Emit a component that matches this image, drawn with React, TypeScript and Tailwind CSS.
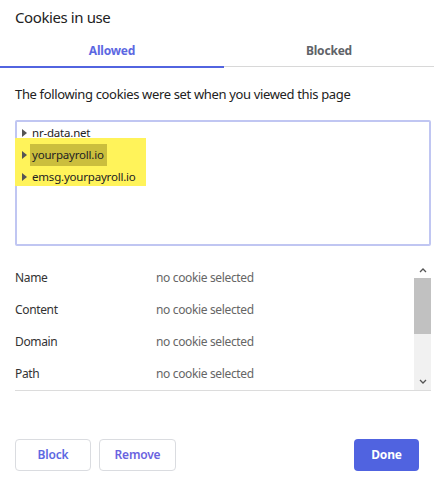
import React from "react";

const font = { fontFamily: '"Noto Sans", "Open Sans", sans-serif' };

function Tri() {
  return (
    <svg width="5" height="8" viewBox="0 0 5 8" className="shrink-0">
      <path d="M0 0 L5 4 L0 8 Z" fill="#555" />
    </svg>
  );
}

export default function App() {
  const rows = ["Name", "Content", "Domain", "Path"];
  return (
    <div className="w-[434px] h-[483px] bg-white text-[#222] flex flex-col" style={font}>
      <div className="pl-[15px] pt-[6px] h-[35px] text-[15px] leading-[22px] tracking-[-0.4px]">Cookies in use</div>
      <div className="flex h-[33px]">
        <div className="w-[224px] flex items-start justify-center pt-[7px] border-b-2 border-[#5264e0] text-[12px] font-bold tracking-[-0.2px] text-[#5c68e2]">
          Allowed
        </div>
        <div className="flex-1 flex items-start justify-center pt-[7px] border-b border-[#d8d8d8] text-[12px] font-bold tracking-[-0.2px] text-[#5f6368] h-[32px]">
          Blocked
        </div>
      </div>
      <div className="pl-[15px] pt-[17px] h-[52px] text-[13px] leading-[18px] tracking-[-0.35px] text-[#222]">
        The following cookies were set when you viewed this page
      </div>
      <div className="relative ml-[15px] w-[416px] h-[126px] border-2 border-[#c0c6f2] rounded-[2px] text-[11.5px] tracking-[-0.2px]">
        <div className="absolute left-[-2px] top-[16px] w-[131px] h-[48px] bg-[#fff35a]" />
        <div className="relative flex items-center h-[22px] pl-[5px] gap-[5px]">
          <Tri />
          <span>nr-data.net</span>
        </div>
        <div className="relative flex items-center h-[22px] pl-[5px] gap-[3px]">
          <Tri />
          <span className="bg-[#cbbe3d] pl-[2px] h-[22px] leading-[22px] w-[77px]">yourpayroll.io</span>
        </div>
        <div className="relative flex items-center h-[22px] pl-[5px] gap-[5px]">
          <Tri />
          <span>emsg.yourpayroll.io</span>
        </div>
      </div>
      <div className="h-[16px]" />
      <div className="ml-[15px] w-[416px] h-[129px] flex border-b border-[#dcdcdc]">
        <div className="flex-1 flex flex-col text-[12px] tracking-[-0.35px]">
          {rows.map((r) => (
            <div key={r} className="flex h-[32px] items-center">
              <span className="w-[141px] text-[#333]">{r}</span>
              <span className="text-[#666]">no cookie selected</span>
            </div>
          ))}
        </div>
        <div className="w-[17px] bg-[#f1f1f1] flex flex-col">
          <div className="h-[16px] flex items-center justify-center bg-white">
            <svg width="8" height="6" viewBox="0 0 8 6"><path d="M1 5 L4 2 L7 5" stroke="#555" strokeWidth="1.3" fill="none" /></svg>
          </div>
          <div className="h-[56px] bg-[#c1c1c1]" />
          <div className="flex-1" />
          <div className="h-[16px] flex items-center justify-center">
            <svg width="8" height="6" viewBox="0 0 8 6"><path d="M1 1 L4 4 L7 1" stroke="#555" strokeWidth="1.3" fill="none" /></svg>
          </div>
        </div>
      </div>
      <div className="flex-1 flex items-start pt-[48px] px-[15px]">
        <button className="w-[76px] h-[32px] border border-[#dadce0] rounded-[4px] text-[12px] font-semibold tracking-[-0.2px] text-[#5c68e2]" style={font}>Block</button>
        <button className="ml-[8px] w-[77px] h-[32px] border border-[#dadce0] rounded-[4px] text-[12px] font-semibold tracking-[-0.2px] text-[#6b63e0]" style={font}>Remove</button>
        <div className="flex-1" />
        <button className="w-[65px] h-[32px] bg-[#5063e0] rounded-[4px] text-[12px] font-bold tracking-[-0.2px] text-white" style={font}>Done</button>
      </div>
    </div>
  );
}
